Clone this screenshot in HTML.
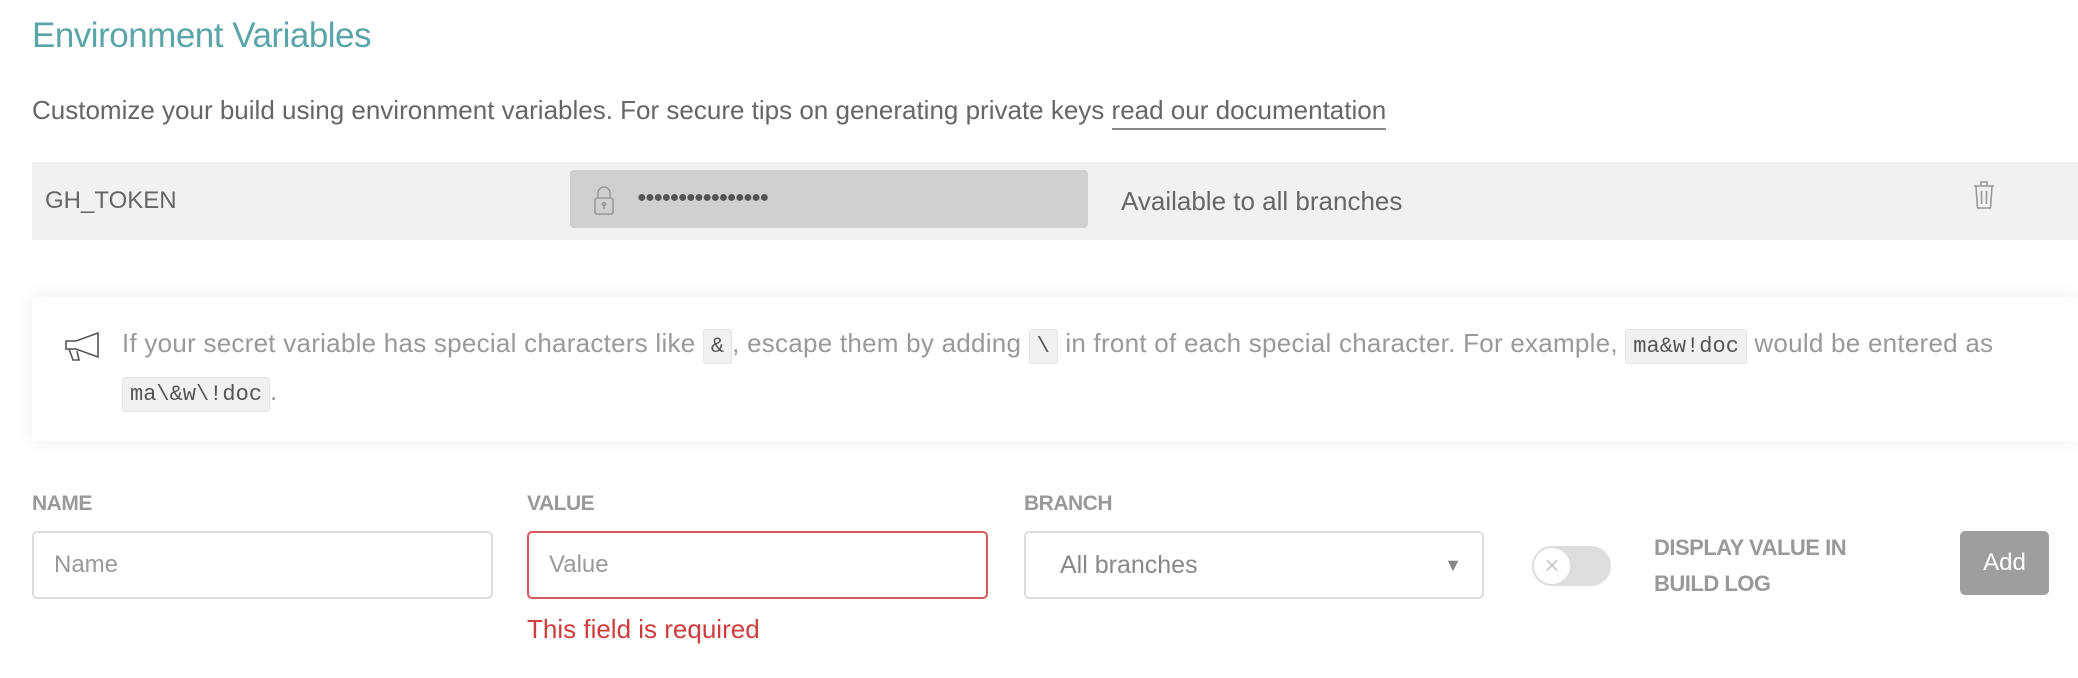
<!DOCTYPE html>
<html><head><meta charset="utf-8"><style>
*{box-sizing:border-box;margin:0;padding:0}
body{width:2078px;height:678px;background:#fff;font-family:"Liberation Sans",sans-serif;position:relative;overflow:hidden;color:#666}
.a{position:absolute;white-space:nowrap}
code{font-family:"Liberation Mono",monospace;font-size:22px;background:#f1f1f1;border:1px solid #e4e4e4;border-radius:3px;padding:4px 7px;color:#555;letter-spacing:0}
.lbl{font-size:21px;font-weight:bold;color:#999;letter-spacing:-0.5px}
.inp{position:absolute;top:531px;height:68px;border:2px solid #ddd;border-radius:5px;font-size:24px;color:#999;padding:0 0 0 20px;line-height:64px}
</style></head><body>
<div class="a" style="left:32px;top:16px;font-size:35px;color:#5aa5a8;letter-spacing:-0.5px">Environment Variables</div>
<div class="a" style="left:32px;top:95px;font-size:26px;color:#666;letter-spacing:0px">Customize your build using environment variables. For secure tips on generating private keys <span style="border-bottom:2px solid #888;padding-bottom:3px">read our documentation</span></div>
<div class="a" style="left:32px;top:162px;width:2046px;height:78px;background:#f1f1f1"></div>
<div class="a" style="left:45px;top:187px;font-size:24px;color:#666">GH_TOKEN</div>
<div class="a" style="left:570px;top:170px;width:518px;height:58px;background:#d0d0d0;border-radius:4px"></div>
<svg class="a" style="left:590px;top:184px" width="28" height="32" viewBox="0 0 28 32" fill="none" stroke="#999" stroke-width="1.6"><path d="M8 14V9a6 6 0 0 1 12 0v5"/><rect x="5" y="14" width="18" height="16" rx="2"/><path d="M14 20v5"/><circle cx="14" cy="20" r="1.5"/></svg>
<div class="a" style="left:637px;top:189px;font-size:16px;color:#555;letter-spacing:-1.5px">●●●●●●●●●●●●●●●●</div>
<div class="a" style="left:1121px;top:186px;font-size:26px;color:#666">Available to all branches</div>
<svg class="a" style="left:1972px;top:180px" width="24" height="30" viewBox="0 0 24 30" fill="none" stroke="#999" stroke-width="1.6"><path d="M2 6h20M9 6V2h6v4M4 6l1.5 22h13L20 6M9.5 11v13M14.5 11v13"/></svg>
<div class="a" style="left:32px;top:297px;width:2046px;height:144px;background:#fff;box-shadow:0 0 18px rgba(0,0,0,0.07)"></div>
<svg class="a" style="left:62px;top:330px" width="40" height="34" viewBox="0 0 40 34" fill="none" stroke="#555" stroke-width="1.6"><path d="M36 3v24L14 19H4v-8h10z"/><path d="M7 19l4 11h6l-2-9"/></svg>
<div class="a" style="left:122px;top:328px;font-size:26px;color:#999;letter-spacing:0.25px">If your secret variable has special characters like <code>&amp;</code>, escape them by adding <code>\</code> in front of each special character. For example, <code>ma&amp;w!doc</code> would be entered as</div>
<div class="a" style="left:122px;top:376px;font-size:26px;color:#999"><code>ma\&amp;w\!doc</code>.</div>
<div class="a lbl" style="left:32px;top:492px">NAME</div>
<div class="a lbl" style="left:527px;top:492px">VALUE</div>
<div class="a lbl" style="left:1024px;top:492px">BRANCH</div>
<div class="inp" style="left:32px;width:461px">Name</div>
<div class="inp" style="left:527px;width:461px;border-color:#d65a5a">Value</div>
<div class="inp" style="left:1024px;width:460px;padding-left:34px;color:#888;font-size:25px">All branches<span style="position:absolute;right:20px;font-size:18px;color:#888">▼</span></div>
<div class="a" style="left:527px;top:614px;font-size:26px;color:#d03c3c">This field is required</div>
<div class="a" style="left:1532px;top:546px;width:79px;height:40px;background:#ddd;border-radius:20px"></div>
<div class="a" style="left:1532px;top:546px;width:40px;height:40px;background:#fff;border:2px solid #ddd;border-radius:50%;text-align:center;line-height:34px;color:#ccc;font-size:26px">×</div>
<div class="a lbl" style="left:1654px;top:535px;font-size:22px">DISPLAY VALUE IN</div>
<div class="a lbl" style="left:1654px;top:571px;font-size:22px">BUILD LOG</div>
<div class="a" style="left:1960px;top:531px;width:89px;height:64px;background:#9e9e9e;border-radius:5px;color:#fff;font-size:24px;text-align:center;line-height:64px">Add</div>
</body></html>
